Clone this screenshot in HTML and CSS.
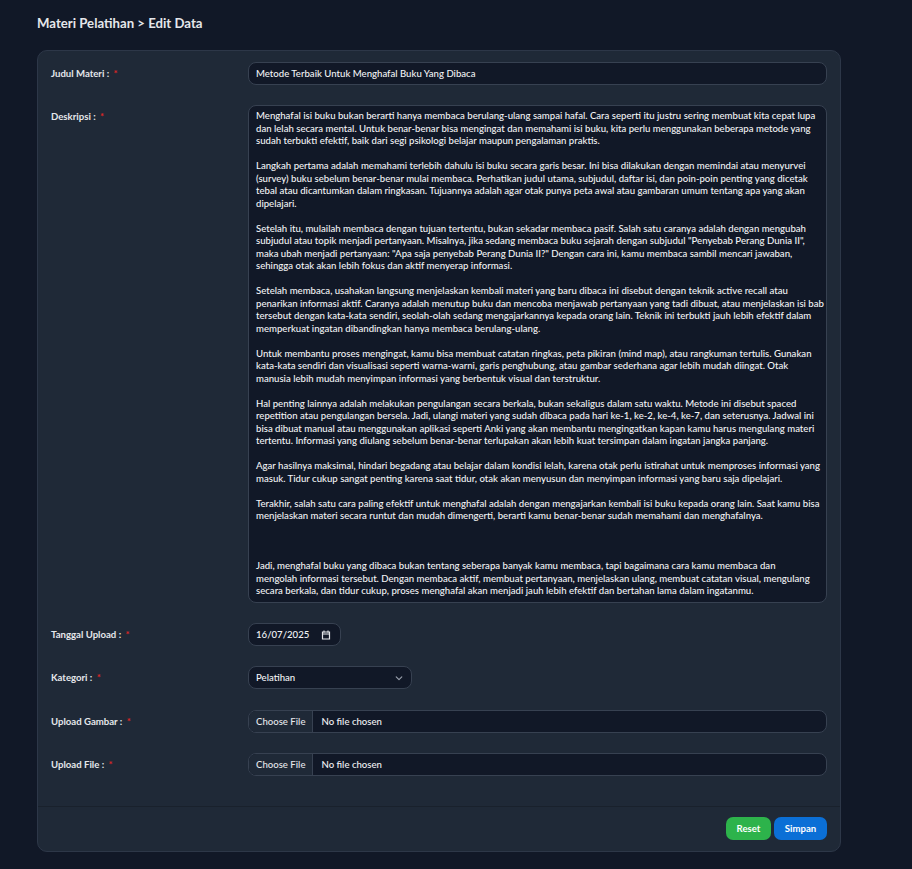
FILE: index.html
```html
<!DOCTYPE html>
<html lang="id">
<head>
<meta charset="utf-8">
<title>Materi Pelatihan - Edit Data</title>
<link rel="stylesheet" href="styles.css">
</head>
<body>
<main class="page">
  <h1 class="page-title">Materi Pelatihan &gt; Edit Data</h1>
  <form class="card">
    <div class="card-body">
      <label class="label" for="judul">Judul Materi : <span class="req">*</span></label>
      <input class="field" id="judul" type="text" value="Metode Terbaik Untuk Menghafal Buku Yang Dibaca">

      <label class="label" for="deskripsi">Deskripsi : <span class="req">*</span></label>
      <textarea class="field textarea" id="deskripsi" wrap="off">Menghafal isi buku bukan berarti hanya membaca berulang-ulang sampai hafal. Cara seperti itu justru sering membuat kita cepat lupa
dan lelah secara mental. Untuk benar-benar bisa mengingat dan memahami isi buku, kita perlu menggunakan beberapa metode yang
sudah terbukti efektif, baik dari segi psikologi belajar maupun pengalaman praktis.

Langkah pertama adalah memahami terlebih dahulu isi buku secara garis besar. Ini bisa dilakukan dengan memindai atau menyurvei
(survey) buku sebelum benar-benar mulai membaca. Perhatikan judul utama, subjudul, daftar isi, dan poin-poin penting yang dicetak
tebal atau dicantumkan dalam ringkasan. Tujuannya adalah agar otak punya peta awal atau gambaran umum tentang apa yang akan
dipelajari.

Setelah itu, mulailah membaca dengan tujuan tertentu, bukan sekadar membaca pasif. Salah satu caranya adalah dengan mengubah
subjudul atau topik menjadi pertanyaan. Misalnya, jika sedang membaca buku sejarah dengan subjudul "Penyebab Perang Dunia II",
maka ubah menjadi pertanyaan: "Apa saja penyebab Perang Dunia II?" Dengan cara ini, kamu membaca sambil mencari jawaban,
sehingga otak akan lebih fokus dan aktif menyerap informasi.

Setelah membaca, usahakan langsung menjelaskan kembali materi yang baru dibaca ini disebut dengan teknik active recall atau
penarikan informasi aktif. Caranya adalah menutup buku dan mencoba menjawab pertanyaan yang tadi dibuat, atau menjelaskan isi bab
tersebut dengan kata-kata sendiri, seolah-olah sedang mengajarkannya kepada orang lain. Teknik ini terbukti jauh lebih efektif dalam
memperkuat ingatan dibandingkan hanya membaca berulang-ulang.

Untuk membantu proses mengingat, kamu bisa membuat catatan ringkas, peta pikiran (mind map), atau rangkuman tertulis. Gunakan
kata-kata sendiri dan visualisasi seperti warna-warni, garis penghubung, atau gambar sederhana agar lebih mudah diingat. Otak
manusia lebih mudah menyimpan informasi yang berbentuk visual dan terstruktur.

Hal penting lainnya adalah melakukan pengulangan secara berkala, bukan sekaligus dalam satu waktu. Metode ini disebut spaced
repetition atau pengulangan bersela. Jadi, ulangi materi yang sudah dibaca pada hari ke-1, ke-2, ke-4, ke-7, dan seterusnya. Jadwal ini
bisa dibuat manual atau menggunakan aplikasi seperti Anki yang akan membantu mengingatkan kapan kamu harus mengulang materi
tertentu. Informasi yang diulang sebelum benar-benar terlupakan akan lebih kuat tersimpan dalam ingatan jangka panjang.

Agar hasilnya maksimal, hindari begadang atau belajar dalam kondisi lelah, karena otak perlu istirahat untuk memproses informasi yang
masuk. Tidur cukup sangat penting karena saat tidur, otak akan menyusun dan menyimpan informasi yang baru saja dipelajari.

Terakhir, salah satu cara paling efektif untuk menghafal adalah dengan mengajarkan kembali isi buku kepada orang lain. Saat kamu bisa
menjelaskan materi secara runtut dan mudah dimengerti, berarti kamu benar-benar sudah memahami dan menghafalnya.



Jadi, menghafal buku yang dibaca bukan tentang seberapa banyak kamu membaca, tapi bagaimana cara kamu membaca dan
mengolah informasi tersebut. Dengan membaca aktif, membuat pertanyaan, menjelaskan ulang, membuat catatan visual, mengulang
secara berkala, dan tidur cukup, proses menghafal akan menjadi jauh lebih efektif dan bertahan lama dalam ingatanmu.</textarea>

      <label class="label" for="tanggal">Tanggal Upload : <span class="req">*</span></label>
      <div class="field date-field" id="tanggal">
        <span class="date-value">16/07/2025</span>
        <svg class="date-icon" width="10" height="10" viewBox="0 0 10 10" aria-hidden="true">
          <path d="M1.5 2h7v7h-7z M1.5 4h7" fill="none" stroke="#e5e7eb" stroke-width="1.2"/>
          <path d="M3 0.6v1.8 M7 0.6v1.8" stroke="#e5e7eb" stroke-width="1.1"/>
        </svg>
      </div>

      <label class="label" for="kategori">Kategori : <span class="req">*</span></label>
      <div class="select-wrap">
        <select class="field select" id="kategori">
          <option selected>Pelatihan</option>
          <option>Artikel</option>
          <option>Video</option>
        </select>
        <svg class="chevron" width="10" height="10" viewBox="0 0 10 10" aria-hidden="true">
          <path d="M2.2 3.8 5 6.6 7.8 3.8" fill="none" stroke="#9ca3af" stroke-width="1.1" stroke-linecap="round" stroke-linejoin="round"/>
        </svg>
      </div>

      <label class="label" for="gambar">Upload Gambar : <span class="req">*</span></label>
      <div class="field file-field" id="gambar">
        <span class="file-btn">Choose File</span>
        <span class="file-name">No file chosen</span>
      </div>

      <label class="label" for="berkas">Upload File : <span class="req">*</span></label>
      <div class="field file-field" id="berkas">
        <span class="file-btn">Choose File</span>
        <span class="file-name">No file chosen</span>
      </div>
    </div>
    <div class="card-footer">
      <button type="reset" class="btn btn-reset">Reset</button>
      <button type="submit" class="btn btn-save">Simpan</button>
    </div>
  </form>
</main>
</body>
</html>
```

FILE: styles.css
```css
* {
  box-sizing: border-box;
}

body {
  margin: 0;
  background: #111827;
  color: #e5e7eb;
  font-family: "Lato", "Noto Sans", sans-serif;
  min-height: 869px;
}

.page {
  padding: 14px 37px 16px;
}

.page-title {
  margin: 0 0 18px;
  font-size: 13.2px;
  line-height: 18px;
  font-weight: 700;
  color: #e5e7eb;
}

.card {
  width: 804px;
  background: #1f2937;
  border: 1px solid #2d3748;
  border-radius: 10px;
}

.card-body {
  display: grid;
  grid-template-columns: 197px 1fr;
  row-gap: 20px;
  align-items: start;
  padding: 11px 13px 30px;
}

.label {
  font-size: 9.6px;
  line-height: 23px;
  font-weight: 700;
  color: #e5e7eb;
}

.req {
  color: #dc2626;
  margin-left: 2px;
}

.field {
  height: 23px;
  background: #111827;
  border: 1px solid #374151;
  border-radius: 8px;
  color: #f3f4f6;
  font-family: inherit;
  font-size: 9.6px;
  font-weight: 500;
  padding: 0 7px;
  outline: none;
}

.textarea {
  display: block;
  width: 100%;
  height: 498px;
  padding: 4px 7px;
  line-height: 12.5px;
  resize: none;
  overflow: hidden;
  white-space: pre;
}

.date-field {
  width: 93px;
  display: flex;
  align-items: center;
  justify-content: space-between;
  padding: 0 9px 0 7px;
}

.date-icon {
  display: block;
}

.select-wrap {
  position: relative;
  width: 164px;
  height: 23px;
  margin-bottom: 1px;
}

.select {
  display: block;
  width: 100%;
  appearance: none;
  -webkit-appearance: none;
}

.chevron {
  position: absolute;
  right: 8px;
  top: 7px;
  pointer-events: none;
}

.file-field {
  display: flex;
  align-items: stretch;
  padding: 0;
  overflow: hidden;
}

.file-btn {
  display: flex;
  align-items: center;
  padding: 0 7px;
  background: #1f2937;
  border-right: 1px solid #374151;
  color: #e5e7eb;
}

.file-name {
  display: flex;
  align-items: center;
  padding: 0 8px;
}

.card-footer {
  display: flex;
  justify-content: flex-end;
  gap: 3px;
  padding: 10px 13px 11px;
  border-top: 1px solid #19212c;
}

.btn {
  height: 23px;
  border: 0;
  border-radius: 7px;
  color: #fff;
  font-family: inherit;
  font-size: 9.6px;
  font-weight: 700;
  padding: 0 10px;
  cursor: pointer;
}

.btn-reset {
  background: #2db34b;
  width: 45px;
}

.btn-save {
  background: #0b6fd6;
  width: 53px;
}
```
